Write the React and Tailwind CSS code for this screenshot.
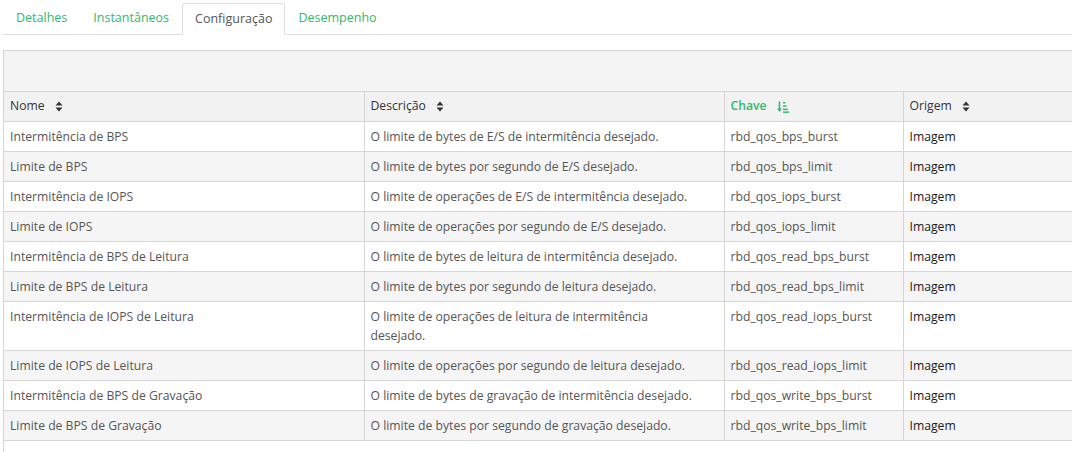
import React from "react";

const rows = [
  ["Intermitência de BPS", "O limite de bytes de E/S de intermitência desejado.", "rbd_qos_bps_burst"],
  ["Limite de BPS", "O limite de bytes por segundo de E/S desejado.", "rbd_qos_bps_limit"],
  ["Intermitência de IOPS", "O limite de operações de E/S de intermitência desejado.", "rbd_qos_iops_burst"],
  ["Limite de IOPS", "O limite de operações por segundo de E/S desejado.", "rbd_qos_iops_limit"],
  ["Intermitência de BPS de Leitura", "O limite de bytes de leitura de intermitência desejado.", "rbd_qos_read_bps_burst"],
  ["Limite de BPS de Leitura", "O limite de bytes por segundo de leitura desejado.", "rbd_qos_read_bps_limit"],
  ["Intermitência de IOPS de Leitura", "WRAP", "rbd_qos_read_iops_burst"],
  ["Limite de IOPS de Leitura", "O limite de operações por segundo de leitura desejado.", "rbd_qos_read_iops_limit"],
  ["Intermitência de BPS de Gravação", "O limite de bytes de gravação de intermitência desejado.", "rbd_qos_write_bps_burst"],
  ["Limite de BPS de Gravação", "O limite de bytes por segundo de gravação desejado.", "rbd_qos_write_bps_limit"],
];

function SortIcon() {
  return (
    <svg width="8" height="11" viewBox="0 0 8 11" className="ml-[10px] inline-block">
      <path d="M4 0.5 L7.5 4.5 H0.5 Z" fill="#333" />
      <path d="M4 10.5 L7.5 6.5 H0.5 Z" fill="#333" />
    </svg>
  );
}

function SortAscIcon() {
  return (
    <svg width="12" height="12" viewBox="0 0 12 12" className="ml-[10px] inline-block">
      <path d="M2.5 0.5 V9" stroke="#32b86c" strokeWidth="1.6" fill="none" />
      <path d="M0 7.5 L2.5 11 L5 7.5 Z" fill="#32b86c" />
      <rect x="6" y="1" width="2.5" height="1.5" fill="#32b86c" />
      <rect x="6" y="4.3" width="3.5" height="1.5" fill="#32b86c" />
      <rect x="6" y="7.6" width="4.8" height="1.5" fill="#32b86c" />
      <rect x="6" y="10.4" width="6" height="1.5" fill="#32b86c" />
    </svg>
  );
}

export default function App() {
  const font = { fontFamily: '"Open Sans", "Noto Sans", sans-serif' };
  return (
    <div className="w-[1072px] h-[452px] overflow-hidden bg-white" style={font}>
      <div className="pl-[3px]">
        <div className="flex h-[35px] items-end border-b border-[#dddddd] pt-[3px]">
          <div className="px-[13px] h-[31px] flex items-center text-[12.5px] text-[#32b86c]">Detalhes</div>
          <div className="px-[13px] h-[31px] flex items-center text-[12.5px] text-[#32b86c]">Instantâneos</div>
          <div className="px-[12px] h-[32px] flex items-center text-[12.5px] text-[#555] bg-white border border-[#dddddd] border-b-white rounded-t-[3px] -mb-px">Configuração</div>
          <div className="px-[13px] h-[31px] flex items-center text-[12.5px] text-[#32b86c]">Desempenho</div>
        </div>
      </div>
      <div className="mt-[15px] ml-[3px] w-[1100px] border-l border-t border-[#d6d6d6]">
        <div className="h-[41px] bg-[#f4f4f4] border-b border-[#d6d6d6]"></div>
        <table className="w-[1100px] table-fixed border-collapse text-[12.2px]">
          <colgroup>
            <col className="w-[360px]" />
            <col className="w-[360px]" />
            <col className="w-[179px]" />
            <col />
          </colgroup>
          <thead>
            <tr className="bg-[#f2f2f2] h-[29px]">
              <th className="text-left font-normal text-[#333] px-[6px] py-0 border-r border-b border-[#d6d6d6]">Nome<SortIcon /></th>
              <th className="text-left font-normal text-[#333] px-[6px] py-0 border-r border-b border-[#d6d6d6]">Descrição<SortIcon /></th>
              <th className="text-left font-semibold text-[#32b86c] px-[6px] py-0 border-r border-b border-[#d6d6d6]">Chave<SortAscIcon /></th>
              <th className="text-left font-normal text-[#333] px-[6px] py-0 border-b border-[#d6d6d6]">Origem<SortIcon /></th>
            </tr>
          </thead>
          <tbody>
            {rows.map((r, i) => (
              <tr key={i} className={i % 2 === 1 ? "bg-[#f5f5f5]" : "bg-white"}>
                <td className="align-top px-[6px] py-[5px] leading-[19px] text-[#555] border-r border-b border-[#d6d6d6] whitespace-nowrap">{r[0]}</td>
                <td className="align-top px-[6px] py-[5px] leading-[19px] text-[#555] border-r border-b border-[#d6d6d6] whitespace-nowrap">
                  {r[1] === "WRAP" ? (
                    <>O limite de operações de leitura de intermitência<br />desejado.</>
                  ) : (
                    r[1]
                  )}
                </td>
                <td className="align-top px-[6px] py-[5px] leading-[19px] text-[#555] border-r border-b border-[#d6d6d6] whitespace-nowrap">{r[2]}</td>
                <td className="align-top px-[6px] py-[5px] leading-[19px] text-[#1a1a1a] font-medium border-b border-[#d6d6d6]">Imagem</td>
              </tr>
            ))}
          </tbody>
        </table>
        <div className="h-[20px]"></div>
      </div>
    </div>
  );
}
